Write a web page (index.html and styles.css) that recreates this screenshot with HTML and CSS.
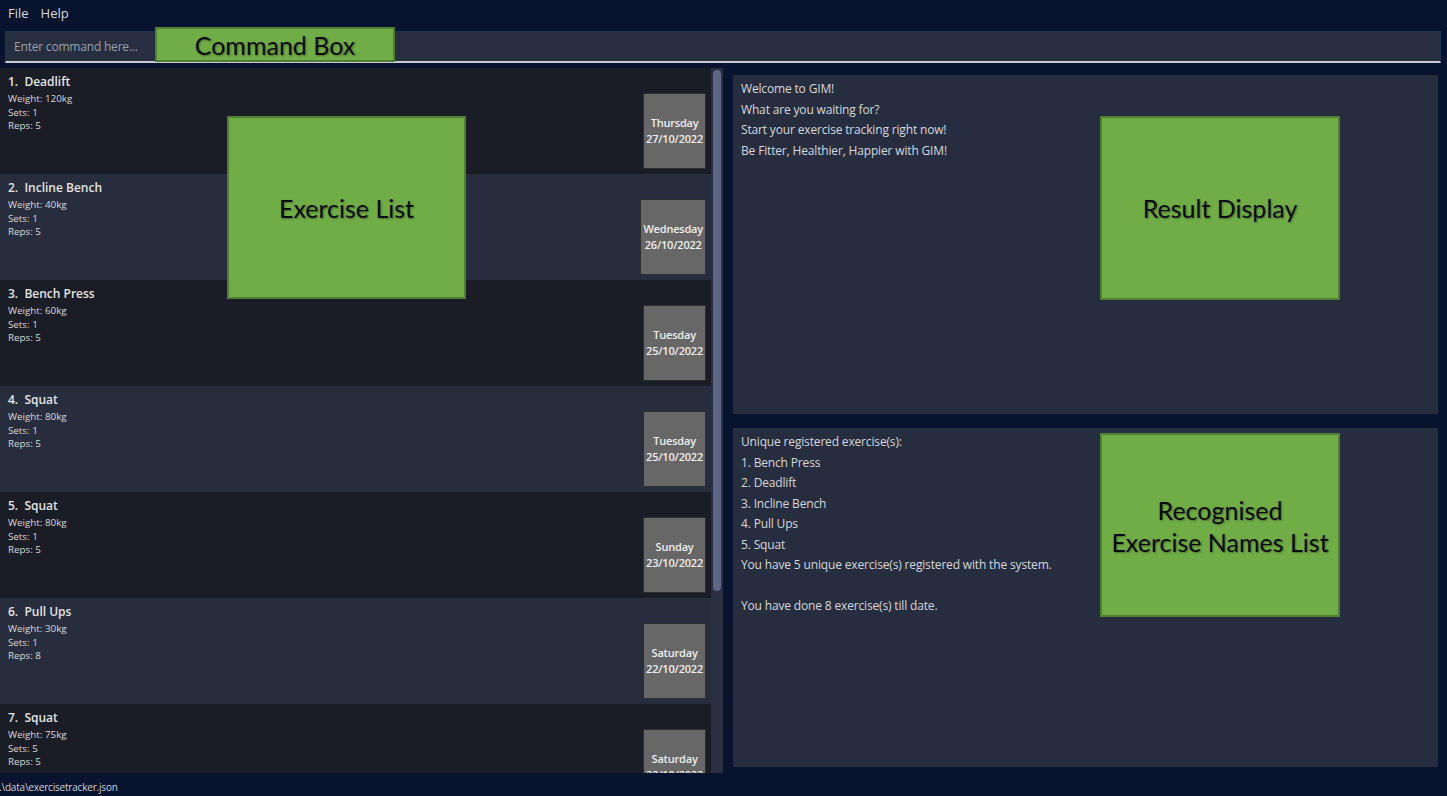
FILE: index.html
```html
<!DOCTYPE html>
<html>
<head>
<meta charset="utf-8">
<title>GIM</title>
<link rel="stylesheet" href="styles.css">
</head>
<body>
<div class="app">
  <div class="menubar">
    <span class="menu-item">File</span>
    <span class="menu-item">Help</span>
  </div>
  <div class="cmd-wrap">
    <div class="cmd">Enter command here...</div>
    <div class="tag tag-cmd">Command Box</div>
  </div>
  <div class="main">
    <div class="list-col">
      <div class="list">
        <div class="row odd">
          <div class="info"><div class="title">1.  Deadlift</div><div class="detail">Weight: 120kg</div><div class="detail">Sets: 1</div><div class="detail">Reps: 5</div></div>
          <div class="date">Thursday<br>27/10/2022</div>
        </div>
        <div class="row even">
          <div class="info"><div class="title">2.  Incline Bench</div><div class="detail">Weight: 40kg</div><div class="detail">Sets: 1</div><div class="detail">Reps: 5</div></div>
          <div class="date">Wednesday<br>26/10/2022</div>
        </div>
        <div class="row odd">
          <div class="info"><div class="title">3.  Bench Press</div><div class="detail">Weight: 60kg</div><div class="detail">Sets: 1</div><div class="detail">Reps: 5</div></div>
          <div class="date">Tuesday<br>25/10/2022</div>
        </div>
        <div class="row even">
          <div class="info"><div class="title">4.  Squat</div><div class="detail">Weight: 80kg</div><div class="detail">Sets: 1</div><div class="detail">Reps: 5</div></div>
          <div class="date">Tuesday<br>25/10/2022</div>
        </div>
        <div class="row odd">
          <div class="info"><div class="title">5.  Squat</div><div class="detail">Weight: 80kg</div><div class="detail">Sets: 1</div><div class="detail">Reps: 5</div></div>
          <div class="date">Sunday<br>23/10/2022</div>
        </div>
        <div class="row even">
          <div class="info"><div class="title">6.  Pull Ups</div><div class="detail">Weight: 30kg</div><div class="detail">Sets: 1</div><div class="detail">Reps: 8</div></div>
          <div class="date">Saturday<br>22/10/2022</div>
        </div>
        <div class="row odd">
          <div class="info"><div class="title">7.  Squat</div><div class="detail">Weight: 75kg</div><div class="detail">Sets: 5</div><div class="detail">Reps: 5</div></div>
          <div class="date">Saturday<br>22/10/2022</div>
        </div>
      </div>
      <div class="scrollbar"><div class="thumb"></div></div>
      <div class="tag tag-list">Exercise List</div>
    </div>
    <div class="right">
      <div class="panel">
        <div class="line">Welcome to GIM!</div>
        <div class="line">What are you waiting for?</div>
        <div class="line">Start your exercise tracking right now!</div>
        <div class="line">Be Fitter, Healthier, Happier with GIM!</div>
        <div class="tag tag-result">Result Display</div>
      </div>
      <div class="panel">
        <div class="line">Unique registered exercise(s):</div>
        <div class="line">1. Bench Press</div>
        <div class="line">2. Deadlift</div>
        <div class="line">3. Incline Bench</div>
        <div class="line">4. Pull Ups</div>
        <div class="line">5. Squat</div>
        <div class="line">You have 5 unique exercise(s) registered with the system.</div>
        <div class="line">&nbsp;</div>
        <div class="line">You have done 8 exercise(s) till date.</div>
        <div class="tag tag-names">Recognised<br>Exercise Names List</div>
      </div>
    </div>
  </div>
  <div class="status">.\data\exercisetracker.json</div>
</div>
</body>
</html>
```

FILE: styles.css
```css
html, body {
  margin: 0;
  padding: 0;
  background: #07132f;
  font-family: "Open Sans", "Noto Sans", sans-serif;
  color: #d6d8dc;
}

.app {
  width: 1447px;
  height: 796px;
  display: flex;
  flex-direction: column;
  overflow: hidden;
  background: #07132f;
}

.menubar {
  height: 26px;
  display: flex;
  align-items: center;
  padding-left: 8px;
  gap: 12px;
  flex: none;
}

.menu-item {
  font-size: 13px;
  color: #d8d8d8;
  line-height: 26px;
}

.cmd-wrap {
  position: relative;
  height: 42px;
  padding: 5px 6px 5px 5px;
  box-sizing: border-box;
  flex: none;
}

.cmd {
  height: 32px;
  box-sizing: border-box;
  background: #272e3f;
  border: 1px solid #1b3450;
  border-bottom: 2px solid #c9ccd2;
  padding-left: 8px;
  font-size: 12px;
  letter-spacing: -0.2px;
  line-height: 29px;
  color: #9aa0aa;
}

.tag {
  position: absolute;
  box-sizing: border-box;
  background: #70ad47;
  border: 2px solid #507e32;
  color: #0a0a0a;
  font-family: "Lato", "Open Sans", sans-serif;
  font-size: 25px;
  display: flex;
  align-items: center;
  justify-content: center;
  text-align: center;
  text-shadow: 1px 1px 2px rgba(0, 0, 0, 0.35);
}

.tag-cmd {
  left: 155px;
  top: 1px;
  width: 240px;
  height: 35px;
}

.main {
  flex: none;
  height: 705px;
  display: flex;
}

.list-col {
  position: relative;
  width: 723px;
  flex: none;
  display: flex;
  overflow: hidden;
  background: #272d3d;
}

.list {
  width: 711px;
  flex: none;
}

.row {
  height: 106px;
  box-sizing: border-box;
  display: flex;
  justify-content: space-between;
  padding: 7px 5px 0 8px;
}

.row.odd { background: #1a1c26; }
.row.even { background: #272d3d; }

.title {
  font-size: 12px;
  font-weight: 600;
  line-height: 14px;
  color: #e4e4e4;
  white-space: pre;
  margin-bottom: 3px;
}

.detail {
  font-size: 9.8px;
  line-height: 13.5px;
  color: #dadada;
}

.date {
  align-self: flex-start;
  margin-top: 18px;
  height: 76px;
  min-width: 62px;
  box-sizing: border-box;
  padding: 0 2px;
  background: #676767;
  border: 1px solid #2e2e2e;
  display: flex;
  align-items: center;
  justify-content: center;
  text-align: center;
  font-size: 11px;
  font-weight: 600;
  letter-spacing: -0.2px;
  line-height: 16px;
  color: #eeeeee;
}

.scrollbar {
  width: 12px;
  flex: none;
  background: #2a3041;
  padding: 2px;
  box-sizing: border-box;
}

.thumb {
  width: 8px;
  height: 521px;
  border-radius: 4px;
  background: #5b6784;
}

.tag-list {
  left: 227px;
  top: 48px;
  width: 239px;
  height: 183px;
}

.right {
  flex: 1;
  display: flex;
  flex-direction: column;
  gap: 14px;
  padding: 7px 9px 6px 10px;
}

.panel {
  position: relative;
  height: 339px;
  box-sizing: border-box;
  background: #262d3f;
  padding: 4px 8px;
}

.line {
  font-size: 12px;
  letter-spacing: -0.16px;
  line-height: 20.5px;
  color: #d6d8dc;
  white-space: nowrap;
}

.tag-result {
  left: 367px;
  top: 41px;
  width: 240px;
  height: 184px;
}

.tag-names {
  left: 367px;
  top: 5px;
  width: 240px;
  height: 184px;
  line-height: 32px;
  padding-top: 2px;
}

.status {
  flex: none;
  height: 23px;
  font-size: 10px;
  letter-spacing: -0.2px;
  line-height: 28px;
  color: #cfd2d8;
  margin-left: -1px;
}
```
